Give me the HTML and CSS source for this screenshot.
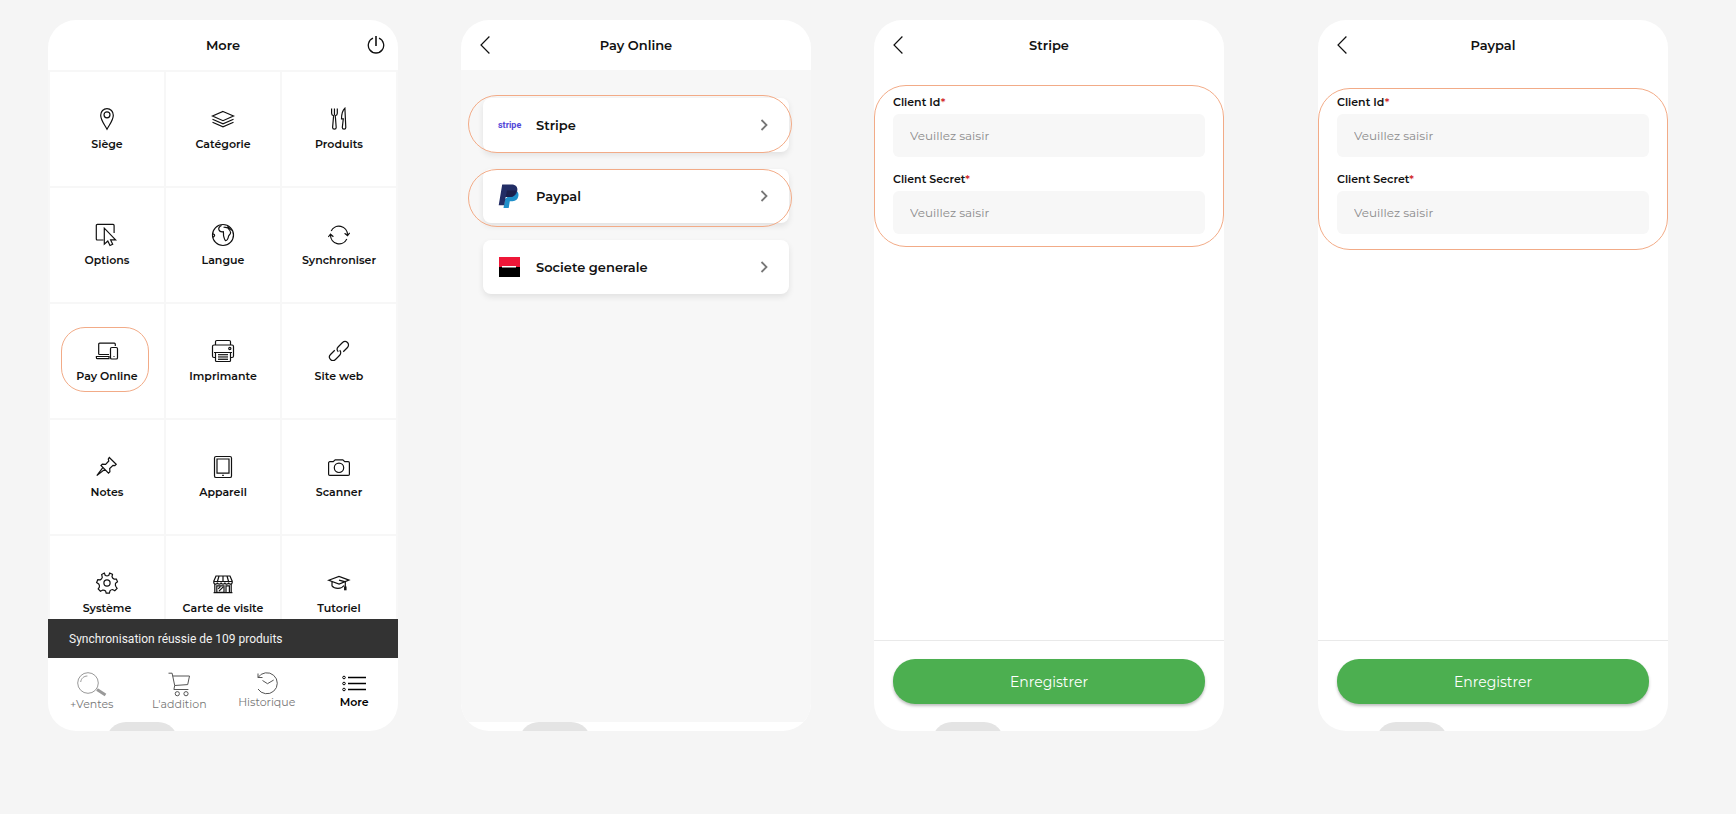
FILE: index.html
```html
<!DOCTYPE html>
<html lang="fr">
<head>
<meta charset="utf-8">
<meta name="viewport" content="width=device-width, initial-scale=1">
<title>Pay Online</title>
<link rel="stylesheet" href="styles.css">
</head>
<body>
<main class="board">

  <section class="phone">
    <header class="bar">
      <h1 class="bar-title">More</h1>
      <button class="bar-end" type="button" aria-label="Déconnexion">
        <svg class="icon-power" viewBox="0 0 18 20"><path d="M6 3.2a7.7 7.7 0 1 0 6 0" stroke-width="1.3"/><path d="M9 1v10" stroke-width="1.6"/></svg>
      </button>
    </header>
    <div class="tiles-area">
      <div class="tiles">
        <button class="tile" type="button">
          <svg viewBox="0 0 24 24"><path d="M12 22.2C9.500 17.500 5.700 13.200 5.700 8.200a6.300 6.600 0 0 1 12.600 0c0 5-3.800 9.300-6.300 14z"/><circle cx="12" cy="7.800" r="3"/></svg>
          <span>Siège</span>
        </button>
        <button class="tile" type="button">
          <svg viewBox="0 0 24 24"><path d="M12 4.500 22.500 9 12 13.700 1.500 9z"/><path d="m1.500 12.200 10.500 4.700 10.500-4.700M1.500 15.200 12 19.900l10.500-4.700"/></svg>
          <span>Catégorie</span>
        </button>
        <button class="tile" type="button">
          <svg viewBox="0 0 24 24"><path d="M4.600 1.500v4.800c0 1.500 1 2.200 2 2.500L5.600 20.400c0 2.300 3.600 2.300 3.600 0L8.300 8.800c1-.3 2-1 2-2.500V1.500M7.450 1.500v6.800M17.900 1.300c-2 1.900-3.400 6-3.400 10.600h1.800l-1 8.600c0 2.200 3.500 2.200 3.500 0L17.900 1.300z"/></svg>
          <span>Produits</span>
        </button>
        <button class="tile" type="button">
          <svg viewBox="0 0 24 24"><path d="M8.500 17H2.300a1 1 0 0 1-1-1V2.400a1 1 0 0 1 1-1h15.800a1 1 0 0 1 1 1V10"/><path d="M9.300 5.200v16l3.500-3.200 2.200 4.500 2.700-1.300-2.100-4.300h5z"/></svg>
          <span>Options</span>
        </button>
        <button class="tile" type="button">
          <svg viewBox="0 0 24 24"><circle cx="12" cy="12" r="10.500"/><path d="M10.500 2.500C8.500 3.500 7.300 5.300 8 7c.6 1.500 2.600 2 4.300 1.700.5 2-.1 2.900.4 4.700.5 1.800.9 3.800 1.800 4.200 1.300.3 2.700-2 2.900-3.900.2-1.800 2.300-2.200 2.200-4.100-.1-2.200-1.400-3.200-3-4.800-1.700-.6-3.300-.2-4-.9M1.700 10.800c1.700.3 2.300 1 1.700 2.200-.4.900-.8 1-1.700 1.100M16.500 3.400l4.300 4"/></svg>
          <span>Langue</span>
        </button>
        <button class="tile" type="button">
          <svg viewBox="0 0 24 24"><path d="M4.200 8A8.600 8.600 0 0 1 20.500 11.800M19.800 16A8.600 8.600 0 0 1 3.500 12.200M17.600 10.200l2.900 2.500 2.200-2.900M1.300 14l2.200-2.800 2.900 2.500"/></svg>
          <span>Synchroniser</span>
        </button>
        <button class="tile" type="button">
          <svg viewBox="0 0 24 24"><path d="M3.700 15.500V5.200a1 1 0 0 1 1-1h14.600a1 1 0 0 1 1 1V7M14 15.500H3.700M14 17.500H1.400v1.200a1 1 0 0 0 1 1H14z"/><rect x="15.500" y="8.500" width="7" height="11.500" rx="1.300"/><path d="M18.500 17.500h1"/></svg>
          <span>Pay Online</span>
          <i class="ring ring-tile"></i>
        </button>
        <button class="tile" type="button">
          <svg viewBox="0 0 24 24"><path d="M4.500 6V2.800a1.300 1.300 0 0 1 1.300-1.300h12.400a1.300 1.300 0 0 1 1.300 1.300V6M4.500 18.500H3a1.500 1.500 0 0 1-1.500-1.500V7.500A1.500 1.500 0 0 1 3 6h18a1.500 1.500 0 0 1 1.500 1.500V17a1.500 1.500 0 0 1-1.500 1.500h-1.500M3 13.500h18M4.500 13.500v8a1 1 0 0 0 1 1h13a1 1 0 0 0 1-1v-8"/><path d="M7 15.500h10M7 17.200h10M7 18.900h10M7 20.500h10" stroke-width=".9"/><circle cx="18.800" cy="9.500" r="1.100"/></svg>
          <span>Imprimante</span>
        </button>
        <button class="tile" type="button">
          <svg viewBox="0 0 24 24"><g transform="rotate(-45 12 12)"><path d="M13 12a3.500 3.500 0 0 1-3.500 3.500H3.500a3.500 3.500 0 0 1 0-7h6M11 12a3.500 3.500 0 0 1 3.500-3.500h6a3.500 3.500 0 0 1 0 7h-6"/></g></svg>
          <span>Site web</span>
        </button>
        <button class="tile" type="button">
          <svg viewBox="0 0 24 24"><path d="M14.300 2.500l6.900 6.800-1.300 1.200-1.900-.2-3.300 3.300.2 3.200-1.400 1.300-7.500-7.600 1.300-1.300 3.300.2 3.200-3.400-.5-1.900zM8 12.300l-6.200 8.300 8.100-6.300"/></svg>
          <span>Notes</span>
        </button>
        <button class="tile" type="button">
          <svg viewBox="0 0 24 24"><rect x="3.500" y="1.500" width="17" height="21" rx="1.600"/><path d="M6 4h12v14.200H6zM11.200 20.400h1.600"/></svg>
          <span>Appareil</span>
        </button>
        <button class="tile" type="button">
          <svg viewBox="0 0 24 24"><path d="M2.800 6.700h3.400l2-1.900h7.600l2 1.900h3.400a1.200 1.200 0 0 1 1.200 1.200v11.300a1.200 1.200 0 0 1-1.200 1.200H2.800a1.200 1.200 0 0 1-1.200-1.200V7.900a1.200 1.200 0 0 1 1.200-1.200z"/><circle cx="12" cy="12.800" r="4.700"/></svg>
          <span>Scanner</span>
        </button>
        <button class="tile" type="button">
          <svg viewBox="0 0 24 24"><path d="M9.300 2.100l1 2.400q1.700.8 3.400 0l1-2.400 2.800 1.200-.5 2.500q.6 1.700 2.200 2.300l2.200-.1 1.100 2.700-2 1.600q-.5 1.700.4 3.200l1.200 1.900-2.300 2.300-2.200-1.200q-1.700 0-2.600 1.300l-.6 2.300h-3.200L10.600 20q-1.500-1.200-3.200-.8l-2 1-2.200-2.200 1.200-2q.3-1.700-.7-3.100l-2.100-1.400 1.200-2.800 2.400.2q1.600-.8 2.100-2.500l-.6-2.800z"/><circle cx="12" cy="12" r="3.100"/></svg>
          <span>Système</span>
        </button>
        <button class="tile" type="button">
          <svg viewBox="0 0 24 24"><path d="M5 5h14l2.200 5.200v1.300c0 2.100-3.600 2.100-3.600 0 0 2.100-3.700 2.100-3.700 0 0 2.100-3.800 2.100-3.800 0 0 2.100-3.700 2.100-3.700 0 0 2.100-3.600 2.100-3.600 0v-1.300zM2.800 10.500h18.400M8 5l-1.600 5.500M12 5v5.500M16 5l1.600 5.500M3.800 13.400v8M20.200 13.400v8M2.600 21.600h18.800M5.800 14.800h7.200v6.600H5.800zM15 21.600v-6.800h3.400v6.800M7.200 17.800l2.200-2.200M8 20.200l4-4"/></svg>
          <span>Carte de visite</span>
        </button>
        <button class="tile" type="button">
          <svg viewBox="0 0 24 24"><path d="M1.700 9.300 12 5.400l10 3.700-9.900 4zM5 10.900v4c2.500 3.200 9.500 3.400 12-.4M12 9.200l6.300 1.600v5.200"/><path d="M18.300 15.500v3.800" stroke-width="2.500"/></svg>
          <span>Tutoriel</span>
        </button>
      </div>
      <p class="toast" role="status">Synchronisation réussie de 109 produits</p>
    </div>
    <nav class="tabs">
      <a class="tab" href="#ventes">
        <svg class="tab-ventes" viewBox="0 0 30 26"><circle cx="11" cy="12" r="10.300"/><path d="M3.700 11c.4-3.500 3.100-6 6.700-6"/><path d="M20 18.500l8.500 5.500" stroke-width="3"/></svg>
        <span>+Ventes</span>
      </a>
      <a class="tab" href="#addition">
        <svg class="tab-cart" viewBox="0 0 24 26"><path d="M1.500 2.200h3.600l2.600 12.300 13-.9L22.500 5H5.800M7.700 14.500l-.8 4h14.500" /><circle cx="10.300" cy="22.700" r="2.100"/><circle cx="19" cy="22.700" r="2.100"/></svg>
        <span>L'addition</span>
      </a>
      <a class="tab" href="#historique">
        <svg class="tab-history" viewBox="0 0 24 24"><path d="M3 6.500A10.500 10.500 0 1 1 3 18M3 2.500v4h4.500M7.500 9.500l5 3.200 6.200-3.700"/></svg>
        <span>Historique</span>
      </a>
      <a class="tab tab-active" href="#more" aria-current="page">
        <svg class="tab-more" viewBox="0 0 24 24"><path d="M6 6.500h18M6 12.500h18M6 18.500h18" stroke-width="1.300"/><circle cx="2" cy="6.500" r="1.300"/><circle cx="2" cy="12.500" r="1.300"/><circle cx="2" cy="18.500" r="1.300"/></svg>
        <span>More</span>
      </a>
    </nav>
    <div class="home"><i class="home-pill"></i></div>
  </section>

  <section class="phone">
    <header class="bar">
      <button class="bar-start" type="button" aria-label="Retour"><svg class="icon-back" viewBox="0 0 10 18"><path d="M9.400.5 1 9l8.400 8.500"/></svg></button>
      <h1 class="bar-title">Pay Online</h1>
    </header>
    <div class="methods">
      <button class="method" type="button">
        <span class="logo logo-stripe" aria-hidden="true">stripe</span>
        <span class="method-name">Stripe</span>
        <svg class="icon-next" viewBox="0 0 8 12"><path d="M1.500 1 6.500 6l-5 5"/></svg>
        <i class="ring ring-stripe"></i>
      </button>
      <button class="method" type="button">
        <svg class="logo logo-paypal" viewBox="0 0 22 24"><path fill="#1f8fc9" d="M17.500 6.500c3 1.200 3.400 3.600 2.700 6.200-.9 3.400-3.400 4.500-6.900 4.500h-1.500L10.700 24H5.500L7 15z"/><path fill="#222d65" d="M4.200.5h9c4.600 0 6.900 2.300 6 6.600-.8 4-3.700 6-7.700 6H7.700l-1.500 8.200H.7z"/><path fill="#1b1f4b" d="M9 6.500h9.200c-.6 4.400-3 6.600-6.700 6.600H7.700z"/></svg>
        <span class="method-name">Paypal</span>
        <svg class="icon-next" viewBox="0 0 8 12"><path d="M1.500 1 6.500 6l-5 5"/></svg>
        <i class="ring ring-paypal"></i>
      </button>
      <button class="method" type="button">
        <svg class="logo logo-sg" viewBox="0 0 22 20"><path fill="#ee1738" d="M1 0h21v10H1z"/><path fill="#000" d="M1 10h21v10H1z"/><path fill="#fff" d="M4 9h14v1.500H4z"/></svg>
        <span class="method-name">Societe generale</span>
        <svg class="icon-next" viewBox="0 0 8 12"><path d="M1.500 1 6.500 6l-5 5"/></svg>
      </button>
    </div>
    <div class="home"><i class="home-pill"></i></div>
  </section>

  <section class="phone">
    <header class="bar">
      <button class="bar-start" type="button" aria-label="Retour"><svg class="icon-back" viewBox="0 0 10 18"><path d="M9.400.5 1 9l8.400 8.500"/></svg></button>
      <h1 class="bar-title">Stripe</h1>
    </header>
    <form class="form">
      <div class="fields">
        <label class="label" for="stripe-id">Client Id<span class="required">*</span></label>
        <input class="input" id="stripe-id" type="text" placeholder="Veuillez saisir">
        <label class="label" for="stripe-secret">Client Secret<span class="required">*</span></label>
        <input class="input" id="stripe-secret" type="text" placeholder="Veuillez saisir">
        <i class="ring ring-form"></i>
      </div>
      <div class="actions"><button class="save" type="button">Enregistrer</button></div>
    </form>
    <div class="home"><i class="home-pill"></i></div>
  </section>

  <section class="phone phone-apart">
    <header class="bar">
      <button class="bar-start" type="button" aria-label="Retour"><svg class="icon-back" viewBox="0 0 10 18"><path d="M9.400.5 1 9l8.400 8.500"/></svg></button>
      <h1 class="bar-title">Paypal</h1>
    </header>
    <form class="form">
      <div class="fields">
        <label class="label" for="paypal-id">Client Id<span class="required">*</span></label>
        <input class="input" id="paypal-id" type="text" placeholder="Veuillez saisir">
        <label class="label" for="paypal-secret">Client Secret<span class="required">*</span></label>
        <input class="input" id="paypal-secret" type="text" placeholder="Veuillez saisir">
        <i class="ring ring-form ring-form-low"></i>
      </div>
      <div class="actions"><button class="save" type="button">Enregistrer</button></div>
    </form>
    <div class="home"><i class="home-pill"></i></div>
  </section>

</main>
</body>
</html>
```

FILE: styles.css
```css
* {
  box-sizing: border-box;
}

body {
  margin: 0;
  background: #f5f5f5;
  color: #111;
  font-family: Montserrat, Inter, "Open Sans", sans-serif;
}

button,
input {
  font: inherit;
  color: inherit;
  border: 0;
  padding: 0;
}

button {
  background: none;
}

svg {
  display: block;
  fill: none;
  stroke: currentColor;
}

.board {
  display: flex;
  gap: 63px;
  min-height: 100vh;
  padding: 20px 68px 83px 48px;
}

.phone {
  flex: 1 1 0;
  min-width: 0;
  display: flex;
  flex-direction: column;
  background: #fff;
  border-radius: 28px;
  overflow: hidden;
}

.phone-apart {
  margin-left: 31px;
}

/* Title bar */
.bar {
  display: grid;
  grid-template-columns: 1fr auto 1fr;
  align-items: center;
  height: 50px;
  padding: 0 13px 0 19px;
}

.bar-title {
  grid-column: 2;
  grid-row: 1;
  margin: 0;
  padding-right: 6px;
  font-size: 13px;
  line-height: 20px;
  font-weight: 600;
}

.bar-start {
  grid-column: 1;
  grid-row: 1;
  justify-self: start;
}

.bar-end {
  grid-column: 3;
  grid-row: 1;
  justify-self: end;
}

.icon-back {
  width: 10px;
  height: 18px;
  stroke-width: 1.2;
}

.icon-power {
  width: 18px;
  height: 20px;
}

/* Menu tiles */
.tiles-area {
  position: relative;
  flex: 1 1 0;
  min-height: 0;
  overflow: hidden;
  background: #f7f7f7;
}

.tiles {
  display: grid;
  grid-template-columns: repeat(3, 1fr);
  gap: 2px;
  padding: 2px;
}

.tile {
  position: relative;
  display: flex;
  flex-direction: column;
  align-items: center;
  justify-content: center;
  gap: 5px;
  aspect-ratio: 1;
  background: #fff;
  font-size: 11px;
  line-height: 16px;
  font-weight: 600;
}

.tile svg {
  width: 24px;
  height: 24px;
  stroke-width: 1.2;
}

.toast {
  position: absolute;
  left: 0;
  right: 0;
  bottom: 0;
  margin: 0;
  padding: 10px 21px 9px;
  background: #333;
  color: #f2f2f2;
  font-family: Roboto, sans-serif;
  font-size: 12px;
  line-height: 20px;
}

/* Bottom tabs */
.tabs {
  display: grid;
  grid-template-columns: repeat(4, 1fr);
  height: 64px;
  padding-top: 13px;
}

.tab {
  display: flex;
  flex-direction: column;
  align-items: center;
  color: #777;
  font-size: 11px;
  line-height: 14px;
  text-decoration: none;
}

.tab-active {
  color: #000;
  font-weight: 600;
}

.tab-ventes {
  width: 30px;
  height: 26px;
  color: #999;
}

.tab-cart {
  width: 24px;
  height: 26px;
}

.tab-history,
.tab-more {
  width: 24px;
  height: 24px;
}

.tab-cart,
.tab-history {
  color: #555;
}

.home {
  height: 9px;
  padding-left: 58px;
  overflow: hidden;
}

.home-pill {
  display: block;
  width: 72px;
  height: 40px;
  border-radius: 20px;
  background: #e4e4e4;
}

/* Payment methods */
.methods {
  flex: 1;
  display: flex;
  flex-direction: column;
  gap: 17px;
  padding: 28px 22px;
  background: #f7f7f7;
}

.method {
  position: relative;
  display: flex;
  align-items: center;
  gap: 16px;
  height: 54px;
  padding: 0 21px 0 15px;
  border-radius: 8px;
  background: #fff;
  box-shadow: 0 3px 6px rgba(0, 0, 0, 0.09);
  font-size: 13px;
  font-weight: 600;
  text-align: left;
}

.method-name {
  flex: 1;
}

.logo {
  width: 22px;
  stroke: none;
}

.logo-stripe {
  color: #5347d8;
  font-family: Roboto, sans-serif;
  font-size: 9px;
  font-weight: 700;
}

.logo-paypal {
  height: 24px;
}

.logo-sg {
  height: 20px;
}

.icon-next {
  width: 8px;
  height: 12px;
  color: #777;
  stroke-width: 1.8;
}

/* Credentials form */
.form {
  flex: 1;
  display: flex;
  flex-direction: column;
}

.fields {
  position: relative;
  flex: 1;
  display: flex;
  flex-direction: column;
  padding: 24px 19px;
}

.label {
  margin-bottom: 4px;
  font-size: 11px;
  line-height: 16px;
  font-weight: 600;
}

.required {
  color: #d32f2f;
}

.input {
  width: 100%;
  height: 43px;
  margin-bottom: 14px;
  padding: 0 17px;
  border-radius: 6px;
  background: #f7f7f7;
  font-size: 12px;
}

.input::placeholder {
  color: #8c8c8c;
  font-weight: 400;
  opacity: 1;
}

.actions {
  padding: 18px 19px;
  border-top: 1px solid #e9e9e9;
}

.save {
  display: block;
  width: 100%;
  height: 45px;
  border-radius: 22px;
  background: #4caf50;
  box-shadow: 0 2px 3px rgba(0, 0, 0, 0.25);
  color: #fff;
  font-size: 14px;
}

/* Highlight outlines */
.ring {
  position: absolute;
  border: 1px solid #f2ab87;
  pointer-events: none;
}

.ring-tile {
  inset: 23px 15px 26px 11px;
  border-radius: 24px;
}

.ring-stripe {
  inset: -3px -3px -1px -15px;
  border-radius: 29px;
}

.ring-paypal {
  inset: 0 -3px -4px -15px;
  border-radius: 29px;
}

.ring-form {
  top: 15px;
  left: 0;
  right: 0;
  height: 162px;
  border-radius: 32px;
}

.ring-form-low {
  top: 18px;
}
```
